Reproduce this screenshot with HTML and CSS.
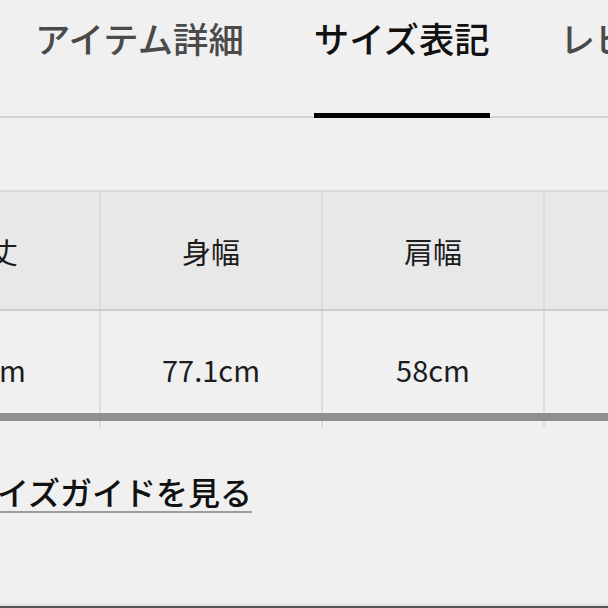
FILE: index.html
```html
<!DOCTYPE html>
<html lang="ja">
<head>
<meta charset="utf-8">
<title>サイズ表記</title>
<link rel="stylesheet" href="styles.css">
</head>
<body>
<div class="page">
  <nav class="tabs">
    <a class="tab">アイテム詳細</a>
    <a class="tab active">サイズ表記</a>
    <a class="tab">レビュー</a>
  </nav>
  <section class="size">
    <div class="table-wrap">
      <div class="table">
        <div class="row head">
          <div class="cell">着丈</div>
          <div class="cell">身幅</div>
          <div class="cell">肩幅</div>
          <div class="cell">袖丈</div>
          <div class="cell">裄丈</div>
        </div>
        <div class="row body">
          <div class="cell">68cm</div>
          <div class="cell">77.1cm</div>
          <div class="cell">58cm</div>
          <div class="cell">20cm</div>
          <div class="cell">48cm</div>
        </div>
      </div>
      <div class="scrollbar"></div>
    </div>
    <a class="guide">サイズガイドを見る</a>
  </section>
  <footer class="bottom"></footer>
</div>
</body>
</html>
```
FILE: styles.css
```css
html, body {
  margin: 0;
  padding: 0;
  overflow: hidden;
}
body {
  background: #f0f0f0;
  font-family: "Noto Sans CJK JP", "Noto Sans", sans-serif;
}
.page {
  width: 608px;
  height: 608px;
  display: flex;
  flex-direction: column;
  overflow: hidden;
}
.tabs {
  display: flex;
  gap: 70px;
  padding-left: 35px;
  border-bottom: 2px solid #d2d2d2;
  white-space: nowrap;
  flex-shrink: 0;
}
.tab {
  font-size: 35.4px;
  line-height: 35px;
  color: #4a4a4a;
  font-weight: 500;
  padding-top: 20px;
  padding-bottom: 58px;
  border-bottom: 5px solid transparent;
  margin-bottom: -2px;
  flex-shrink: 0;
}
.tab.active {
  color: #111;
  border-bottom-color: #000;
}
.size {
  display: flex;
  flex-direction: column;
  align-items: flex-start;
}
.table-wrap {
  position: relative;
  margin-top: 72px;
  width: 608px;
  overflow: hidden;
}
.table {
  margin-left: -123px;
  width: 1110px;
}
.row {
  display: grid;
  grid-template-columns: repeat(5, 222px);
}
.head {
  background: #e8e8e8;
  border-top: 2px solid #dadada;
  border-bottom: 2px solid #cdcdcd;
}
.head .cell {
  height: 117px;
}
.body {
  background: #f0f0f0;
}
.body .cell {
  height: 116px;
}
.cell {
  border-left: 2px solid #dcdcdc;
  display: flex;
  align-items: center;
  justify-content: center;
  font-size: 29px;
  color: #1c1c1c;
  box-sizing: border-box;
}
.scrollbar {
  position: absolute;
  left: 0;
  right: 0;
  bottom: 6px;
  height: 8px;
  background: #8f8f8f;
}
.guide {
  margin-top: 48px;
  margin-left: -35px;
  font-size: 32px;
  line-height: 32px;
  font-weight: 500;
  color: #111;
  padding-bottom: 4px;
  border-bottom: 2px solid #9c9c9c;
  white-space: nowrap;
}
.bottom {
  margin-top: auto;
  height: 2px;
  border-top: 2px solid #e2e2e2;
  background: #555;
  flex-shrink: 0;
}
```
